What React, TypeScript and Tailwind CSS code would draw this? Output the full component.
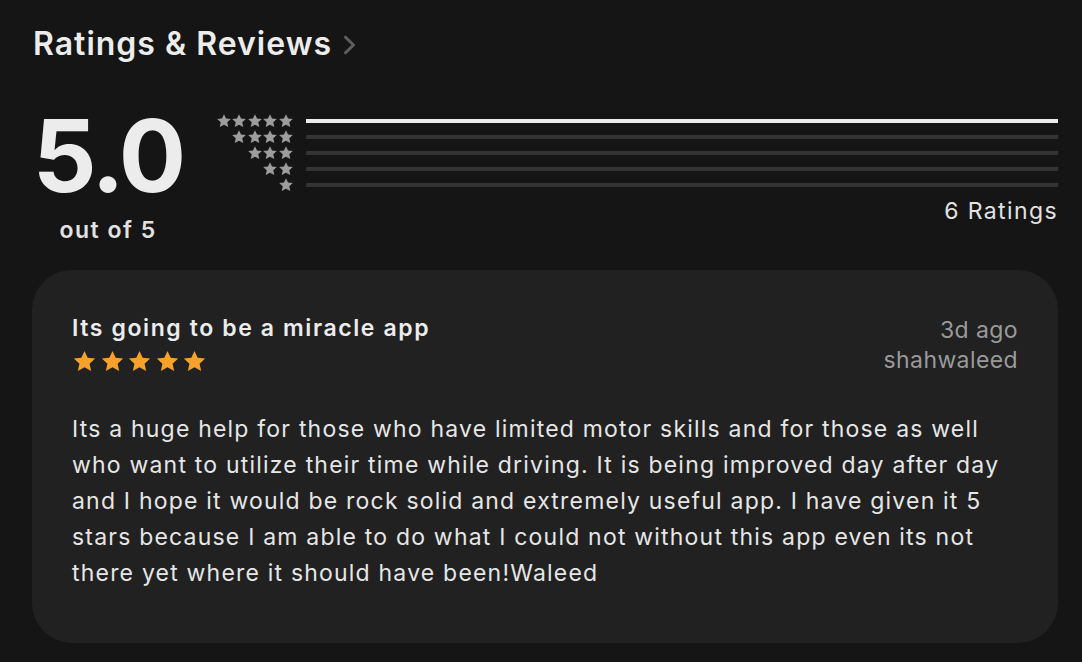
const font = { fontFamily: "Inter, 'Noto Sans', sans-serif" };

function Star({ className }: { className: string }) {
  return (
    <svg viewBox="0 0 24 24" className={className} fill="currentColor">
      <path d="M12 1.8l3.05 6.6 7.2.78-5.37 4.88 1.5 7.1L12 17.55l-6.38 3.61 1.5-7.1L1.75 9.18l7.2-.78z" />
    </svg>
  );
}

const rows = [5, 4, 3, 2, 1];
const counts = [6, 0, 0, 0, 0];

export default function App() {
  return (
    <div className="min-h-screen w-full bg-[#151515] text-[#ececec]" style={font}>
      <div className="pl-[33px] pr-[24px] pt-[24px]">
        {/* Header */}
        <div className="flex items-center gap-[11px]">
          <h1 className="text-[32px] font-semibold leading-[40px] tracking-[1px] text-[#ececec]">
            Ratings &amp; Reviews
          </h1>
          <svg viewBox="0 0 14 20" className="mt-[2px] h-[20px] w-[14px]" fill="none">
            <path d="M2.5 2.2L10.5 10l-8 7.8" stroke="#5e5e5e" strokeWidth="3" strokeLinecap="round" strokeLinejoin="round" />
          </svg>
        </div>

        {/* Summary */}
        <div className="mt-[42px] flex items-start">
          <div className="flex w-[150px] flex-col items-center">
            <div className="text-[100px] font-bold leading-[100px] tracking-[-3px] text-[#ececec]">
              5.0
            </div>
            <div className="mt-[10px] text-[23px] font-semibold leading-[28px] tracking-[1.5px] text-[#e2e2e2]">
              out of 5
            </div>
          </div>

          <div className="ml-[30px] flex flex-1 flex-col">
            <div className="mt-[8px] flex flex-col gap-[3px]">
              {rows.map((n, i) => (
                <div key={n} className="flex h-[13px] items-center">
                  <div className="flex w-[81px] justify-end">
                    {Array.from({ length: n }).map((_, k) => (
                      <Star key={k} className="-ml-[0.4px] h-[16px] w-[16px] text-[#9c9c9c]" />
                    ))}
                  </div>
                  <div className="ml-[12px] h-[4px] flex-1 bg-[#333333]">
                    <div
                      className="h-full bg-[#ececec]"
                      style={{ width: `${(counts[i] / 6) * 100}%` }}
                    />
                  </div>
                </div>
              ))}
            </div>
            <div className="mt-[6px] self-end text-[23px] leading-[28px] tracking-[1.4px] text-[#e2e2e2]">
              6 Ratings
            </div>
          </div>
        </div>
      </div>

      {/* Review card */}
      <div className="ml-[32px] mr-[24px] mt-[26px] rounded-[40px] bg-[#212121] px-[40px] pb-[52px] pt-[44px]">
        <div className="flex items-start justify-between">
          <div>
            <div className="text-[23px] font-semibold leading-[28px] tracking-[1.6px] text-[#ececec]">
              Its going to be a miracle app
            </div>
            <div className="mt-[7px] flex gap-[2.5px]">
              {[0, 1, 2, 3, 4].map((k) => (
                <Star key={k} className="h-[25px] w-[25px] text-[#f7a12a]" />
              ))}
            </div>
          </div>
          <div className="mt-[1px] flex flex-col items-end text-[23px] leading-[30px] tracking-[0.4px] text-[#9a9a9a]">
            <span>3d ago</span>
            <span>shahwaleed</span>
          </div>
        </div>
        <p className="mt-[36px] whitespace-nowrap text-[23px] leading-[36px] tracking-[1.2px] text-[#e6e6e6]">
          Its a huge help for those who have limited motor skills and for those as well
          <br />
          who want to utilize their time while driving. It is being improved day after day
          <br />
          and I hope it would be rock solid and extremely useful app. I have given it 5
          <br />
          stars because I am able to do what I could not without this app even its not
          <br />
          there yet where it should have been!Waleed
        </p>
      </div>
    </div>
  );
}
